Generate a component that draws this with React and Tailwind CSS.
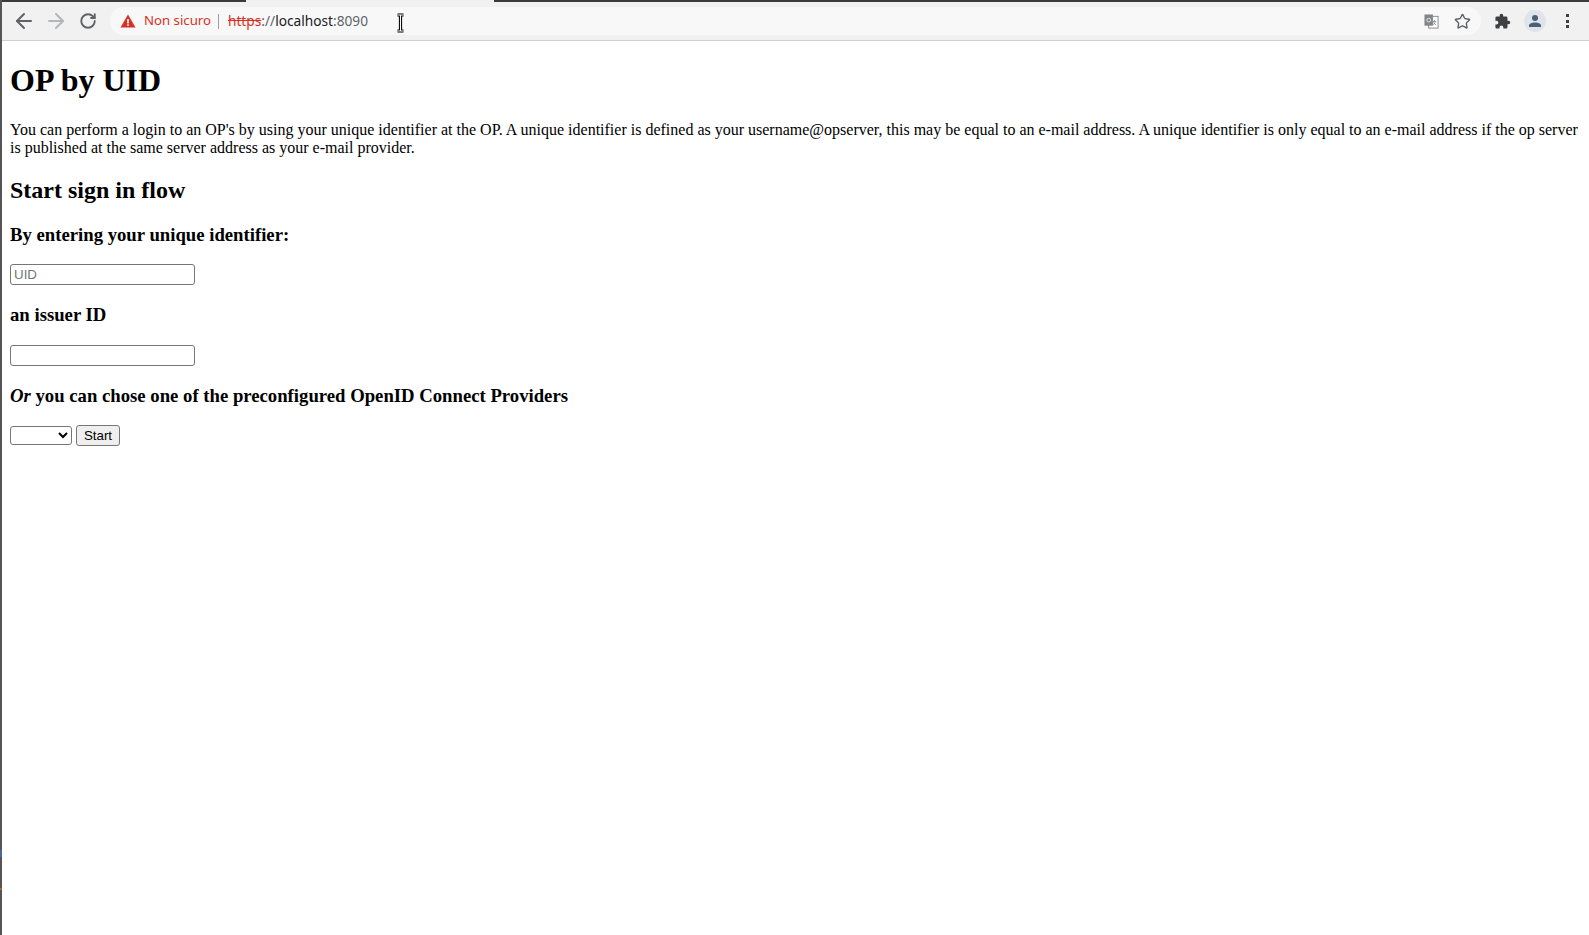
import React from "react";
import { ArrowLeft, ArrowRight, RotateCw, Star } from "lucide-react";

function TranslateIcon() {
  return (
    <svg width="15" height="15" viewBox="0 0 16 16" className="block">
      <rect x="5" y="2.5" width="10" height="12.5" fill="#fff" stroke="#80868b" strokeWidth="1" />
      <rect x="0.5" y="0.5" width="9" height="12" fill="#80868b" />
      <circle cx="5" cy="6.5" r="2" fill="none" stroke="#e8e8e8" strokeWidth="1" />
      <path d="M11 6.5v1M9.5 8h3.5M12 8c-.3 1.5-1 2.6-2.3 3.4M10.2 9c.5 1 1.2 1.8 2.5 2.4" fill="none" stroke="#80868b" strokeWidth="0.9" />
    </svg>
  );
}

function PuzzleIcon() {
  return (
    <svg width="17" height="17" viewBox="0 0 24 24" className="block" fill="#3c4043">
      <path d="M20.5 11H19V7a2 2 0 0 0-2-2h-4V3.5a2.5 2.5 0 0 0-5 0V5H4a2 2 0 0 0-2 2v3.8h1.5a2.7 2.7 0 0 1 0 5.4H2V20a2 2 0 0 0 2 2h3.8v-1.5a2.7 2.7 0 0 1 5.4 0V22H17a2 2 0 0 0 2-2v-4h1.5a2.5 2.5 0 0 0 0-5z" />
    </svg>
  );
}

function AvatarIcon() {
  return (
    <div className="w-[22px] h-[22px] rounded-full bg-[#dfe3ea] flex items-center justify-center">
      <svg width="16" height="16" viewBox="0 0 16 16" className="block" fill="#4a6078">
        <circle cx="8" cy="5" r="3" />
        <path d="M2 14v-1.5C2 10.5 5 9.5 8 9.5s6 1 6 3V14z" />
      </svg>
    </div>
  );
}

function Toolbar() {
  return (
    <div className="h-[39px] bg-[#f1f1f1] border-b border-[#cfcfcf] flex items-center">
      <div className="w-[10px]" />
      <ArrowLeft size={24} color="#5f6368" strokeWidth={2} />
      <div className="w-[8px]" />
      <ArrowRight size={24} color="#b4b6b8" strokeWidth={2} />
      <div className="w-[11px]" />
      <RotateCw size={18} color="#5f6368" strokeWidth={2.5} />
      <div className="ml-[13px] w-[1371px] h-[28px] rounded-full bg-[#f8f8f8] flex items-center pl-[10px]">
        <svg width="16" height="14" viewBox="0 0 16 14" className="block">
          <path d="M8 0.5 15.5 13.5H.5z" fill="#d93025" />
          <rect x="7.2" y="5" width="1.6" height="4.5" fill="#fff" />
          <rect x="7.2" y="10.3" width="1.6" height="1.6" fill="#fff" />
        </svg>
        <span className="ml-[8px] text-[13.2px] text-[#d93025] font-['Noto_Sans',sans-serif]">Non sicuro</span>
        <div className="ml-[7px] w-px h-[15px] bg-[#9aa0a6]" />
        <div className="ml-[9px] text-[13.7px] font-['Noto_Sans',sans-serif] text-[#5f6368]">
          <span className="text-[#d93025] line-through">https</span>
          <span>://</span>
          <span className="text-[#202124]">localhost</span>
          <span>:8090</span>
        </div>
        <div className="ml-auto flex items-center">
          <TranslateIcon />
          <div className="w-[15px]" />
          <Star size={17} color="#5f6368" strokeWidth={2} />
          <div className="w-[10px]" />
        </div>
      </div>
      <div className="ml-[13px] flex items-center">
        <PuzzleIcon />
        <div className="w-[13px]" />
        <AvatarIcon />
        <div className="w-[20px]" />
        <div className="flex flex-col gap-[2.5px]">
          <div className="w-[3px] h-[3px] bg-[#3c4043]" />
          <div className="w-[3px] h-[3px] bg-[#3c4043]" />
          <div className="w-[3px] h-[3px] bg-[#3c4043]" />
        </div>
      </div>
    </div>
  );
}

export default function App() {
  return (
    <div className="relative h-screen overflow-hidden bg-white text-black font-['Liberation_Serif',serif] flex">
      {/* edge of the window behind */}
      <div className="w-[2px] shrink-0 flex flex-col bg-[#555555]">
        <div className="h-[850px]" />
        <div className="h-[7px] bg-[#4a6a9a]" />
        <div className="h-[31px]" />
        <div className="h-[2px] bg-[#b5622f]" />
      </div>
      <div className="flex-1 min-w-0 flex flex-col">
        {/* window strip + active tab */}
        <div className="h-[2px] flex shrink-0">
          <div className="w-[244px] bg-[#3b3b3b]" />
          <div className="w-[248px] bg-[#f1f1f1]" />
          <div className="flex-1 bg-[#3b3b3b]" />
        </div>
        <Toolbar />
        <div className="flex-1 px-2">
          <h1 className="text-[32px] leading-[37px] font-bold mt-[21px] mb-[22px]">OP by UID</h1>
          <p className="text-[16px] leading-[18px] mb-4">
            You can perform a login to an OP's by using your unique identifier at the OP. A unique identifier is defined as your username@opserver, this may be equal to an e-mail address. A unique identifier is only equal to an e-mail address if the op server is published at the same server address as your e-mail provider.
          </p>
          <h2 className="text-[24px] leading-[27px] font-bold mt-[20px] mb-[20px]">Start sign in flow</h2>
          <h3 className="text-[18.72px] leading-[21px] font-bold mb-[19px]">By entering your unique identifier:</h3>
          <input
            placeholder="UID"
            className="block w-[185px] h-[21px] px-[3px] border border-[#767676] rounded-[3px] text-[13.33px] font-['Liberation_Sans',sans-serif] placeholder:text-[#757575]"
          />
          <h3 className="text-[18.72px] leading-[21px] font-bold mt-[19px] mb-[20px]">an issuer ID</h3>
          <input className="block w-[185px] h-[21px] px-[3px] border border-[#767676] rounded-[3px] text-[13.33px] font-['Liberation_Sans',sans-serif]" />
          <h3 className="text-[18.72px] leading-[21px] font-bold mt-[19px] mb-[19px]">
            <em>Or</em> you can chose one of the preconfigured OpenID Connect Providers
          </h3>
          <div className="flex items-center gap-[4px]">
            <select className="w-[62px] h-[19px] border border-[#767676] rounded-[3px] bg-white text-[13.33px] font-['Liberation_Sans',sans-serif]" />
            <button className="w-[44px] h-[21px] border border-[#767676] rounded-[3px] bg-[#efefef] text-[13.33px] leading-none font-['Liberation_Sans',sans-serif]">Start</button>
          </div>
        </div>
      </div>
      {/* text cursor left over the page */}
      <svg width="9" height="20" viewBox="0 0 9 20" className="absolute left-[396px] top-[13px]">
        <path d="M1.5 2h6M1.5 18h6M4.5 2v16" stroke="#000" strokeWidth="3.2" fill="none" />
        <path d="M1.5 2h6M1.5 18h6M4.5 2v16" stroke="#fff" strokeWidth="1.1" fill="none" />
      </svg>
    </div>
  );
}
